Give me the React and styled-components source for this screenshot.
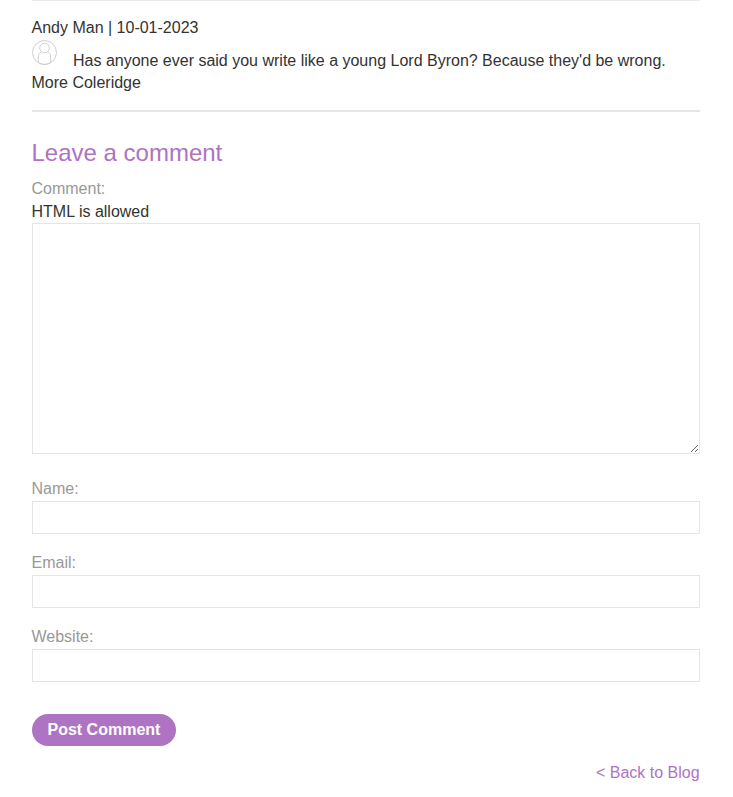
import React from "react";
import styled, { createGlobalStyle } from "styled-components";

const GlobalStyle = createGlobalStyle`
  *, *::before, *::after { box-sizing: border-box; }
  body {
    margin: 0;
    background: #fff;
    color: #333332;
    font: 16px/22.5px "Liberation Sans", Arial, sans-serif;
  }
`;

const Page = styled.main`
  height: 797px;
  padding: 0 33.4px 0 31.5px;
  overflow: hidden;
`;

const Comment = styled.article`
  height: 112px;
  padding-top: 16px;
  border-top: 1px solid #e9ecec;
  border-bottom: 2px solid #e5e5e5;
`;

const Line = styled.p`
  margin: 0;
`;

const Avatar = styled.svg`
  display: inline-block;
  width: 25px;
  height: 25px;
  margin: 0 16.5px 1px 0;
  vertical-align: baseline;
`;

const Heading = styled.h2`
  margin: 26px 0 0;
  color: #ae73c2;
  font-size: 24px;
  font-weight: 400;
  line-height: 30px;
`;

const Label = styled.label`
  display: block;
  color: #999998;
`;

const Field = styled.div`
  margin-top: ${({ $gap }) => $gap}px;
`;

const TextArea = styled.textarea`
  display: block;
  width: 100%;
  height: 231px;
  border: 1px solid #e5e5e5;
  border-radius: 0;
  background: #fff;
  outline: none;
  resize: both;
`;

const Input = styled.input`
  display: block;
  width: 100%;
  height: 33px;
  border: 1px solid #e5e5e5;
  border-radius: 0;
  outline: none;
`;

const Button = styled.button`
  display: block;
  width: 144.9px;
  height: 32px;
  margin-top: 32px;
  padding: 0;
  border: 0;
  border-radius: 16px;
  background: #ae73c2;
  color: #fff;
  font: bold 16px/32px "Liberation Sans", Arial, sans-serif;
`;

const BackLink = styled.a`
  display: block;
  margin-top: 16px;
  color: #ae73c2;
  text-align: right;
  text-decoration: none;
`;

const fields = ["Name", "Email", "Website"];

export default function App() {
  return (
    <>
      <GlobalStyle />
      <Page>
        <Comment>
          <Line>Andy Man | 10-01-2023</Line>
          <Line>
            <Avatar viewBox="0 0 25 25" fill="none" stroke="#c8cccc" strokeWidth="0.9">
              <circle cx="12.5" cy="12.5" r="12" />
              <circle cx="12.5" cy="8" r="4.8" />
              <path d="M9.5 11.9C7.4 12.6 6.3 14.5 6.3 17V22.4C8 23.7 10 24.4 12.5 24.4S17 23.7 18.7 22.4V17C18.7 14.5 17.6 12.6 15.5 11.9" />
            </Avatar>
            Has anyone ever said you write like a young Lord Byron? Because they'd be wrong. More Coleridge
          </Line>
        </Comment>
        <Heading>Leave a comment</Heading>
        <Field $gap={10}>
          <Label htmlFor="comment">Comment:</Label>
          <Line>HTML is allowed</Line>
          <TextArea id="comment" />
        </Field>
        {fields.map((name, i) => (
          <Field key={name} $gap={i === 0 ? 24 : 18.5}>
            <Label htmlFor={name}>{name}:</Label>
            <Input id={name} />
          </Field>
        ))}
        <Button type="button">Post Comment</Button>
        <BackLink href="#blog">&lt; Back to Blog</BackLink>
      </Page>
    </>
  );
}
